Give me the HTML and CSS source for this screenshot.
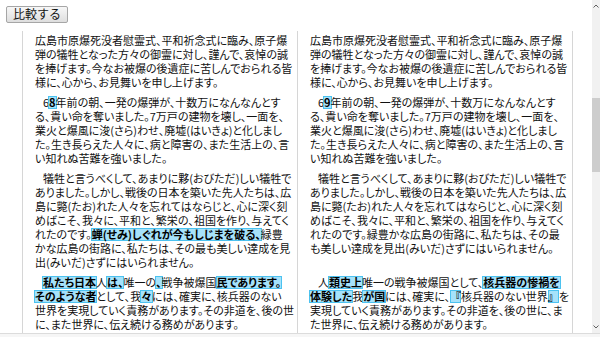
FILE: index.html
```html
<!DOCTYPE html>
<html lang="ja">
<head>
  <meta charset="UTF-8" />
  <title>比較</title>
  <link rel="stylesheet" href="styles.css">
</head>
<body>
  <div class="view">
    <div class="main">
      <div class="toolbar">
        <button class="compare-btn" type="button">比較する</button>
      </div>

      <div class="diff">
        <div class="cell old top">
          <p>広島市原爆死没者慰霊式、平和祈念式に臨み、原子爆<br>弾の犠牲となった方々の御霊に対し、謹んで、哀悼の誠<br>を捧げます。今なお被爆の後遺症に苦しんでおられる皆<br>様に、心から、お見舞いを申し上げます。</p>
        </div>
        <div class="cell new top">
          <p>広島市原爆死没者慰霊式、平和祈念式に臨み、原子爆<br>弾の犠牲となった方々の御霊に対し、謹んで、哀悼の誠<br>を捧げます。今なお被爆の後遺症に苦しんでおられる皆<br>様に、心から、お見舞いを申し上げます。</p>
        </div>

        <div class="cell old">
          <p class="indent">6<span class="hl">8</span>年前の朝、一発の爆弾が、十数万になんなんとす<br>る、貴い命を奪いました。7万戸の建物を壊し、一面を、<br>業火と爆風に浚(さら)わせ、廃墟(はいきょ)と化しまし<br>た。生き長らえた人々に、病と障害の、また生活上の、言<br>い知れぬ苦難を強いました。</p>
        </div>
        <div class="cell new">
          <p class="indent">6<span class="hl">9</span>年前の朝、一発の爆弾が、十数万になんなんとす<br>る、貴い命を奪いました。7万戸の建物を壊し、一面を、<br>業火と爆風に浚(さら)わせ、廃墟(はいきょ)と化しまし<br>た。生き長らえた人々に、病と障害の、また生活上の、言<br>い知れぬ苦難を強いました。</p>
        </div>

        <div class="cell old">
          <p class="indent">犠牲と言うべくして、あまりに夥(おびただ)しい犠牲で<br>ありました。しかし、戦後の日本を築いた先人たちは、広<br>島に斃(たお)れた人々を忘れてはならじと、心に深く刻<br>めばこそ、我々に、平和と、繁栄の、祖国を作り、与えてく<br>れたのです。<span class="hl">蝉(せみ)しぐれが今もしじまを破る、</span>緑豊<br>かな広島の街路に、私たちは、その最も美しい達成を見<br>出(みいだ)さずにはいられません。</p>
        </div>
        <div class="cell new">
          <p class="indent">犠牲と言うべくして、あまりに夥(おびただ)しい犠牲で<br>ありました。しかし、戦後の日本を築いた先人たちは、広<br>島に斃(たお)れた人々を忘れてはならじと、心に深く刻<br>めばこそ、我々に、平和と、繁栄の、祖国を作り、与えてく<br>れたのです。緑豊かな広島の街路に、私たちは、その最<br>も美しい達成を見出(みいだ)さずにはいられません。</p>
        </div>

        <div class="cell old">
          <p class="indent"><span class="hl">私たち日本</span>人<span class="hl">は、</span>唯一の<span class="hl">、</span>戦争被爆国<span class="hl">民であります。</span><br><span class="hl">そのような者</span>として、我<span class="hl">々</span>には、確実に、核兵器のない<br>世界を実現していく責務があります。その非道を、後の世<br>に、また世界に、伝え続ける務めがあります。</p>
        </div>
        <div class="cell new">
          <p class="indent">人<span class="hl">類史上</span>唯一の戦争被爆国として、<span class="hl">核兵器の惨禍を</span><br><span class="hl">体験した</span>我<span class="hl">が国</span>には、確実に、<span class="hl bracket">『</span>核兵器のない世界<span class="hl bracket">』</span>を<br>実現していく責務があります。その非道を、後の世に、ま<br>た世界に、伝え続ける務めがあります。</p>
        </div>
      </div>
    </div>

    <div class="scrollbar">
      <svg class="arrow" width="8" height="12" viewBox="0 0 8 12"><path d="M1.5 7.5 L4 5 L6.5 7.5" fill="none" stroke="#606060" stroke-width="1"/></svg>
      <div class="track">
        <div class="thumb"></div>
      </div>
      <svg class="arrow" width="8" height="12" viewBox="0 0 8 12"><path d="M1.5 4.5 L4 7 L6.5 4.5" fill="none" stroke="#606060" stroke-width="1"/></svg>
    </div>
  </div>
  <div class="hscroll"></div>
</body>
</html>
```

FILE: styles.css
```css
body {
  margin: 0;
  background: #fff;
  color: #111;
  font-family: "Noto Sans CJK JP", "Liberation Sans", sans-serif;
  overflow: hidden;
}
.view {
  display: flex;
  height: 333px;
}
.main {
  flex: 1;
  overflow: hidden;
}
.toolbar {
  padding: 0 0 0 6px;
  height: 31px;
  box-sizing: border-box;
}
.compare-btn {
  font-family: "Noto Sans CJK JP", sans-serif;
  font-size: 12px;
  line-height: 14px;
  height: 17px;
  padding: 0 6px;
  color: #111;
  background: linear-gradient(#f7f7f7, #dedede);
  border: 1px solid #a6a6a6;
  border-radius: 2px;
}
.diff {
  display: grid;
  grid-template-columns: 276px 275px;
  margin-left: 22px;
}
.cell {
  border-right: 1px solid #d6d6d6;
}
.cell.old {
  border-left: 1px solid #d6d6d6;
  padding: 0 0 0 12px;
}
.cell.new {
  padding: 0 0 0 12px;
}
.cell.top {
  padding-top: 2px;
}
.cell p {
  margin: 0 0 6px;
  font-size: 11px;
  line-height: 14px;
  white-space: nowrap;
  font-feature-settings: "palt";
}
.cell p.indent {
  text-indent: 8px;
}
.hl {
  display: inline-block;
  line-height: 13px;
  text-indent: 0;
  padding: 0 1px;
  margin: 0 -1px;
  background: #a6e2fa;
  box-shadow: inset 0 0 0 1px #4cc2f0;
  font-weight: bold;
  color: #000;
}
.hl.bracket {
  font-feature-settings: normal;
  padding: 0;
  margin: 0;
}
.scrollbar {
  width: 8px;
  background: #f1f1f1;
  display: flex;
  flex-direction: column;
}
.arrow {
  display: block;
  flex: none;
}
.track {
  flex: 1;
  padding-top: 86px;
}
.thumb {
  height: 74px;
  background: #cdcdcd;
}
.hscroll {
  height: 4px;
  border-top: 1px solid #dcdcdc;
  background: #f6f6f6;
}
```
